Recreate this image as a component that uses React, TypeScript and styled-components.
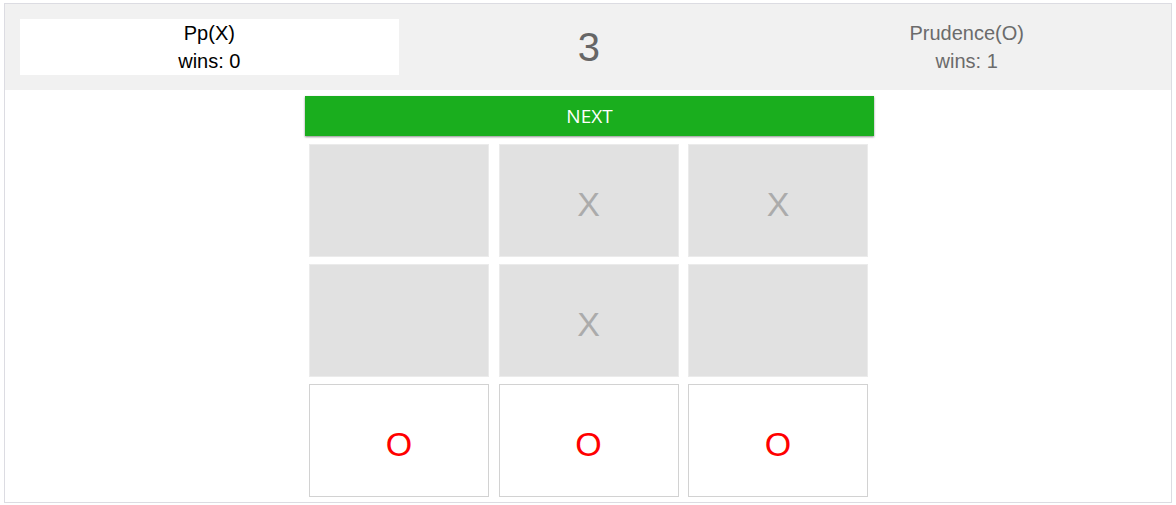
import styled, { createGlobalStyle } from 'styled-components';

type Mark = 'X' | 'O' | '';

const board: Mark[] = ['', 'X', 'X', '', 'X', '', 'O', 'O', 'O'];

const players = [
	{ name: 'Pp(X)', wins: 0, active: true },
	{ name: 'Prudence(O)', wins: 1, active: false },
];

export default function App() {
	const [left, right] = players;

	return (
		<>
			<GlobalStyle />
			<Page>
				<ScoreBar>
					<PlayerCard active={left.active}>
						<div>{left.name}</div>
						<div>wins: {left.wins}</div>
					</PlayerCard>
					<Round>3</Round>
					<PlayerCard active={right.active}>
						<div>{right.name}</div>
						<div>wins: {right.wins}</div>
					</PlayerCard>
				</ScoreBar>

				<Game>
					<NextButton>NEXT</NextButton>
					<Grid>
						{board.map((mark, i) => (
							<Cell key={i} filled={mark !== 'O'} mark={mark}>
								{mark}
							</Cell>
						))}
					</Grid>
				</Game>
			</Page>
		</>
	);
}

const GlobalStyle = createGlobalStyle`
	html, body {
		margin: 0;
		background: #fff;
		font-family: 'Liberation Sans', Arial, sans-serif;
	}
	* {
		box-sizing: border-box;
	}
`;

const Page = styled.div`
	margin: 3px 4px 0;
	border: 1px solid #dcdce2;
	padding-bottom: 5px;
`;

const ScoreBar = styled.header`
	display: grid;
	grid-template-columns: repeat(3, 1fr);
	align-items: center;
	padding: 15px;
	background: #f1f1f1;
`;

interface PlayerCardProps {
	active: boolean;
}

const PlayerCard = styled.div<PlayerCardProps>`
	text-align: center;
	font-size: 20px;
	line-height: 28px;
	background: ${(p) => (p.active ? '#fff' : 'transparent')};
	color: ${(p) => (p.active ? '#000' : '#6b6b6b')};
`;

const Round = styled.div`
	text-align: center;
	font-size: 40px;
	line-height: 56px;
	color: #666;
	padding-left: 2px;
`;

const Game = styled.main`
	width: 569px;
	margin: 6px 0 0 calc(50% - 283px);
`;

const NextButton = styled.button`
	display: block;
	width: 100%;
	height: 40px;
	border: none;
	background: #1aae1e;
	color: #fff;
	font-family: 'Open Sans', sans-serif;
	font-size: 19px;
	box-shadow: 0 1px 2px rgba(0, 0, 0, 0.45);
	cursor: pointer;
`;

const Grid = styled.div`
	display: grid;
	grid-template-columns: repeat(3, 180px);
	grid-auto-rows: 113px;
	column-gap: 9.5px;
	row-gap: 7px;
	padding: 0 5px 0 4px;
	margin-top: 8px;
`;

interface CellProps {
	filled: boolean;
	mark: Mark;
}

const Cell = styled.div<CellProps>`
	display: flex;
	align-items: center;
	justify-content: center;
	padding-top: 8px;
	font-size: 34px;
	background: ${(p) => (p.filled ? '#e1e1e1' : '#fff')};
	border: 1px solid ${(p) => (p.filled ? '#ebebeb' : '#d2d2d2')};
	color: ${(p) => (p.mark === 'O' ? '#ff0000' : '#ababab')};
`;
